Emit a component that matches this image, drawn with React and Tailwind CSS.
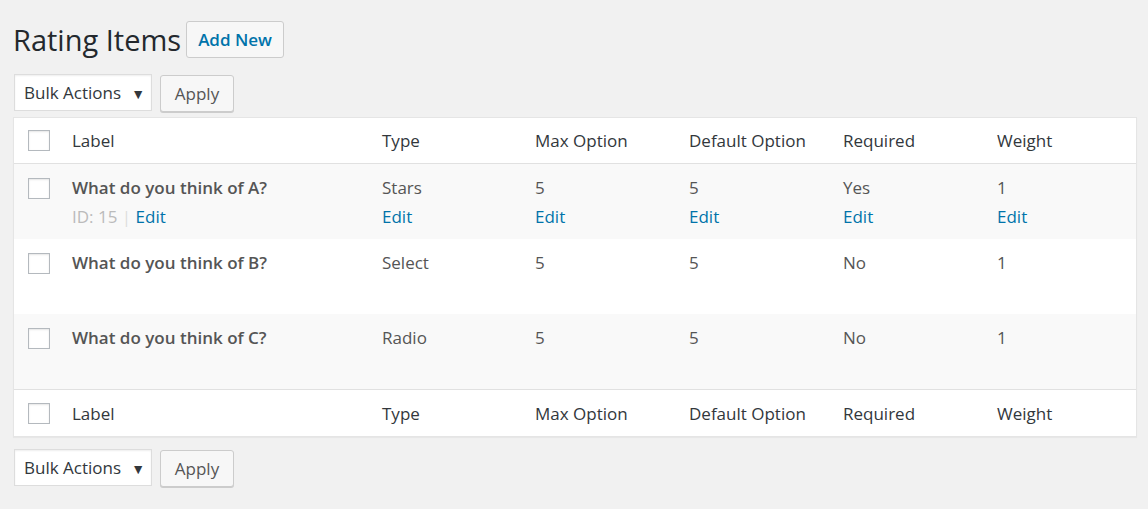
import React from "react";

const ROWS = [
  { label: "What do you think of A?", type: "Stars", max: "5", def: "5", req: "Yes", weight: "1", id: 15, actions: true, striped: true },
  { label: "What do you think of B?", type: "Select", max: "5", def: "5", req: "No", weight: "1", striped: false },
  { label: "What do you think of C?", type: "Radio", max: "5", def: "5", req: "No", weight: "1", striped: true },
];

const COLS = "grid grid-cols-[58px_310px_153px_154px_154px_154px_1fr]";

function Checkbox() {
  return <div className="ml-[14px] h-[21px] w-[22px] border border-[#b4b9be] bg-white shadow-[inset_0_1px_2px_rgba(0,0,0,0.1)]" />;
}

function BulkBar() {
  return (
    <div className="flex items-start gap-2">
      <div className="ml-[1px] flex h-[37px] w-[138px] items-center justify-between border border-[#ddd] bg-white pl-[9px] pr-[6px] pt-[1px] text-[17px] text-[#32373c] shadow-[inset_0_1px_2px_rgba(0,0,0,0.07)]">
        <span>Bulk Actions</span>
        <span className="text-[14px]">▼</span>
      </div>
      <button className="mt-[1px] h-[37px] w-[74px] rounded-[3px] border border-[#ccc] bg-[#f7f7f7] pt-[1px] text-[17px] text-[#555] shadow-[0_1px_0_#ccc]">
        Apply
      </button>
    </div>
  );
}

function HeadRow({ border, h }) {
  const cells = ["Label", "Type", "Max Option", "Default Option", "Required", "Weight"];
  return (
    <div className={`${COLS} ${h} items-center bg-white text-[17px] text-[#32373c] ${border}`}>
      <Checkbox />
      {cells.map((c) => (
        <div key={c} className="pt-[1px]">{c}</div>
      ))}
    </div>
  );
}

function Row({ r }) {
  const cell = (v) => (
    <div className="pt-[11px] text-[#555]">
      <div className="leading-[26px]">{v}</div>
      {r.actions && <div className="mt-[3px] leading-[26px] text-[#0073aa]">Edit</div>}
    </div>
  );
  return (
    <div className={`${COLS} h-[75px] ${r.striped ? "bg-[#f9f9f9]" : "bg-white"} text-[17px]`}>
      <div className="pt-[14px]">
        <Checkbox />
      </div>
      <div className="pt-[11px]">
        <div className="font-semibold leading-[26px] text-[#555]">{r.label}</div>
        {r.actions && (
          <div className="mt-[3px] leading-[26px]">
            <span className="text-[#bbb]">ID: {r.id}</span>
            <span className="text-[#ddd]"> | </span>
            <span className="text-[#0073aa]">Edit</span>
          </div>
        )}
      </div>
      {cell(r.type)}
      {cell(r.max)}
      {cell(r.def)}
      {cell(r.req)}
      {cell(r.weight)}
    </div>
  );
}

export default function App() {
  return (
    <div className="min-h-[509px] bg-[#f1f1f1] pl-[13px] pr-[11px] pt-[21px] font-['Open_Sans',sans-serif]">
      <div className="flex h-[37px] items-center">
        <h1 className="text-[29px] leading-[36px] text-[#23282d]">Rating Items</h1>
        <button className="ml-[5px] h-[37px] rounded-[3px] border border-[#ccc] bg-[#f7f7f7] px-[11px] pt-[1px] text-[17px] font-semibold text-[#0073aa]">
          Add New
        </button>
      </div>

      <div className="mt-[16px]">
        <BulkBar />
      </div>

      <div className="mt-[5px] border border-[#e5e5e5] bg-white shadow-[0_1px_1px_rgba(0,0,0,0.04)]">
        <HeadRow h="h-[46px]" border="border-b border-[#e1e1e1]" />
        {ROWS.map((r) => (
          <Row key={r.label} r={r} />
        ))}
        <HeadRow h="h-[47px]" border="border-t border-[#e1e1e1]" />
      </div>

      <div className="mt-[12px]">
        <BulkBar />
      </div>
    </div>
  );
}
